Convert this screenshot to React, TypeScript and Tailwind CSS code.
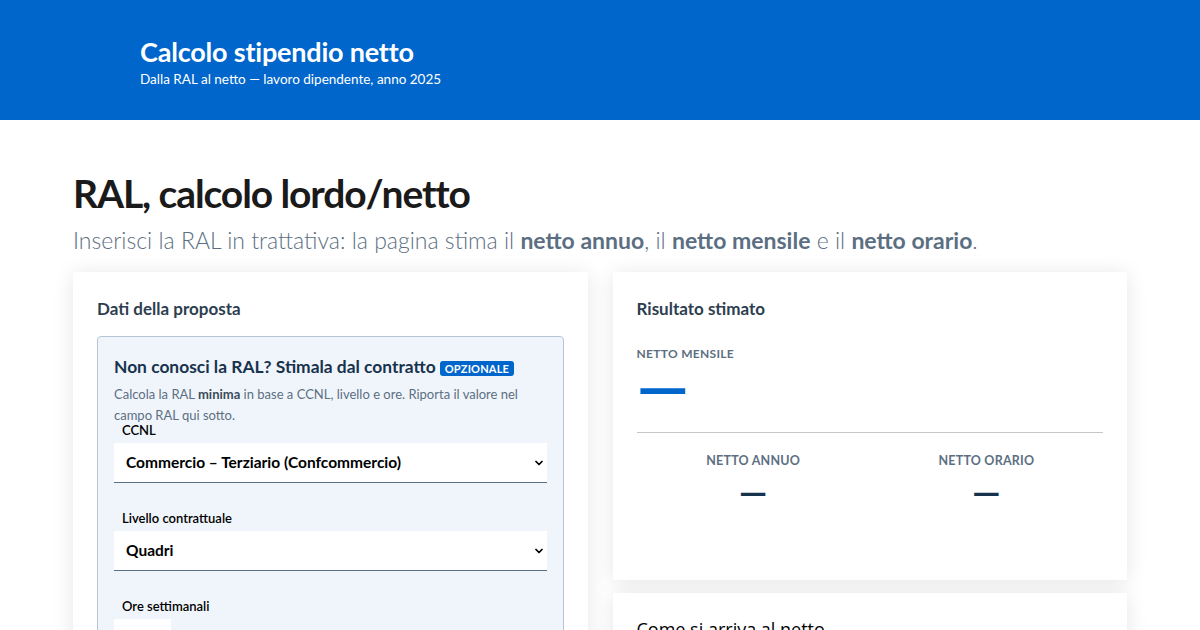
import { ChevronDown } from 'lucide-react';

function SelectField({ label, value }: { label: string; value: string }) {
  return (
    <div>
      <div className="px-2 text-[13px] font-semibold text-black leading-4">{label}</div>
      <div className="mt-[5px] h-[40px] bg-white border-b border-[#5c6f82] flex items-center justify-between pl-3 pr-[2px]">
        <span className="text-[15.5px] font-bold text-black">{value}</span>
        <ChevronDown className="w-[12px] h-[12px] text-black" strokeWidth={3.5} />
      </div>
    </div>
  );
}

export default function App() {
  return (
    <div className="min-h-screen bg-white font-['Lato','Open_Sans',sans-serif] text-[#17324d]">
      {/* Header */}
      <header className="bg-[#0066cc] h-[120px] px-[140px] pt-[36px] text-white">
        <h1 className="text-[27px] font-bold leading-8 tracking-[-0.2px]">Calcolo stipendio netto</h1>
        <p className="text-[13.5px] leading-5 mt-[1px]">Dalla RAL al netto — lavoro dipendente, anno 2025</p>
      </header>

      <main className="px-[73px] pt-[49px]">
        <h2 className="text-[39px] font-bold leading-12 text-[#1a1a1a] tracking-[-1.1px]">RAL, calcolo lordo/netto</h2>
        <p className="mt-[7px] text-[23px] font-light leading-8 text-[#5c6f82]">
          Inserisci la RAL in trattativa: la pagina stima il <strong className="font-bold">netto annuo</strong>, il{' '}
          <strong className="font-bold">netto mensile</strong> e il <strong className="font-bold">netto orario</strong>.
        </p>

        <div className="mt-[16px] grid grid-cols-2 gap-[25px] items-start">
          {/* Left card */}
          <section className="bg-white shadow-[0_2px_20px_rgba(0,0,0,0.1)] px-6 pt-[27px] h-[400px]">
            <h3 className="text-[17px] font-bold text-[#2d3e50] leading-5">Dati della proposta</h3>
            <div className="mt-[17px] bg-[#f0f5fb] border border-[#b7c6d6] rounded px-4 pt-[18px] pb-4">
              <div className="flex items-center gap-1">
                <h4 className="text-[17.4px] font-bold text-[#17324d] leading-6">Non conosci la RAL? Stimala dal contratto</h4>
                <span className="bg-[#0066cc] text-white text-[11px] font-bold px-[5px] rounded-[3px] leading-[15px] mt-[2px] tracking-[0.2px]">
                  OPZIONALE
                </span>
              </div>
              <p className="mt-[5px] text-[13px] leading-[21px] text-[#5c6f82]">
                Calcola la RAL <strong className="text-[#3b4b5c]">minima</strong> in base a CCNL, livello e ore. Riporta il valore nel campo RAL qui sotto.
              </p>
              <div className="-mt-[4px]">
                <SelectField label="CCNL" value="Commercio – Terziario (Confcommercio)" />
              </div>
              <div className="mt-[27px]">
                <SelectField label="Livello contrattuale" value="Quadri" />
              </div>
              <div className="mt-[27px]">
                <div className="px-2 text-[13px] font-semibold text-black leading-4">Ore settimanali</div>
                <div className="mt-[5px] h-[40px] w-[57px] bg-white" />
              </div>
            </div>
          </section>

          {/* Right column */}
          <div className="flex flex-col gap-[13px]">
            <section className="bg-white shadow-[0_2px_20px_rgba(0,0,0,0.1)] px-6 pt-[27px] h-[308px]">
              <h3 className="text-[17px] font-bold text-[#2d3e50] leading-5">Risultato stimato</h3>
              <div className="mt-[27px] text-[12px] font-bold text-[#5c6f82] tracking-[0.3px] leading-4">NETTO MENSILE</div>
              <div className="mt-[4px] text-[66px] font-bold leading-[40px] text-[#0066cc]">—</div>
              <div className="mt-[26px] border-t border-[#c5c7c9]" />
              <div className="grid grid-cols-2 pt-[20px]">
                {['NETTO ANNUO', 'NETTO ORARIO'].map((t) => (
                  <div key={t} className="text-center">
                    <div className="text-[12.5px] font-bold text-[#5c6f82] tracking-[0.2px] leading-4">{t}</div>
                    <div className="mt-[6px] text-[36px] font-bold leading-8 text-[#17324d]">—</div>
                  </div>
                ))}
              </div>
            </section>
            <section className="bg-white shadow-[0_2px_20px_rgba(0,0,0,0.1)] px-6 pt-[24px] h-[100px]">
              <h3 className="text-[18px] text-black leading-6 font-['Open_Sans',sans-serif]">Come si arriva al netto</h3>
            </section>
          </div>
        </div>
      </main>
    </div>
  );
}
